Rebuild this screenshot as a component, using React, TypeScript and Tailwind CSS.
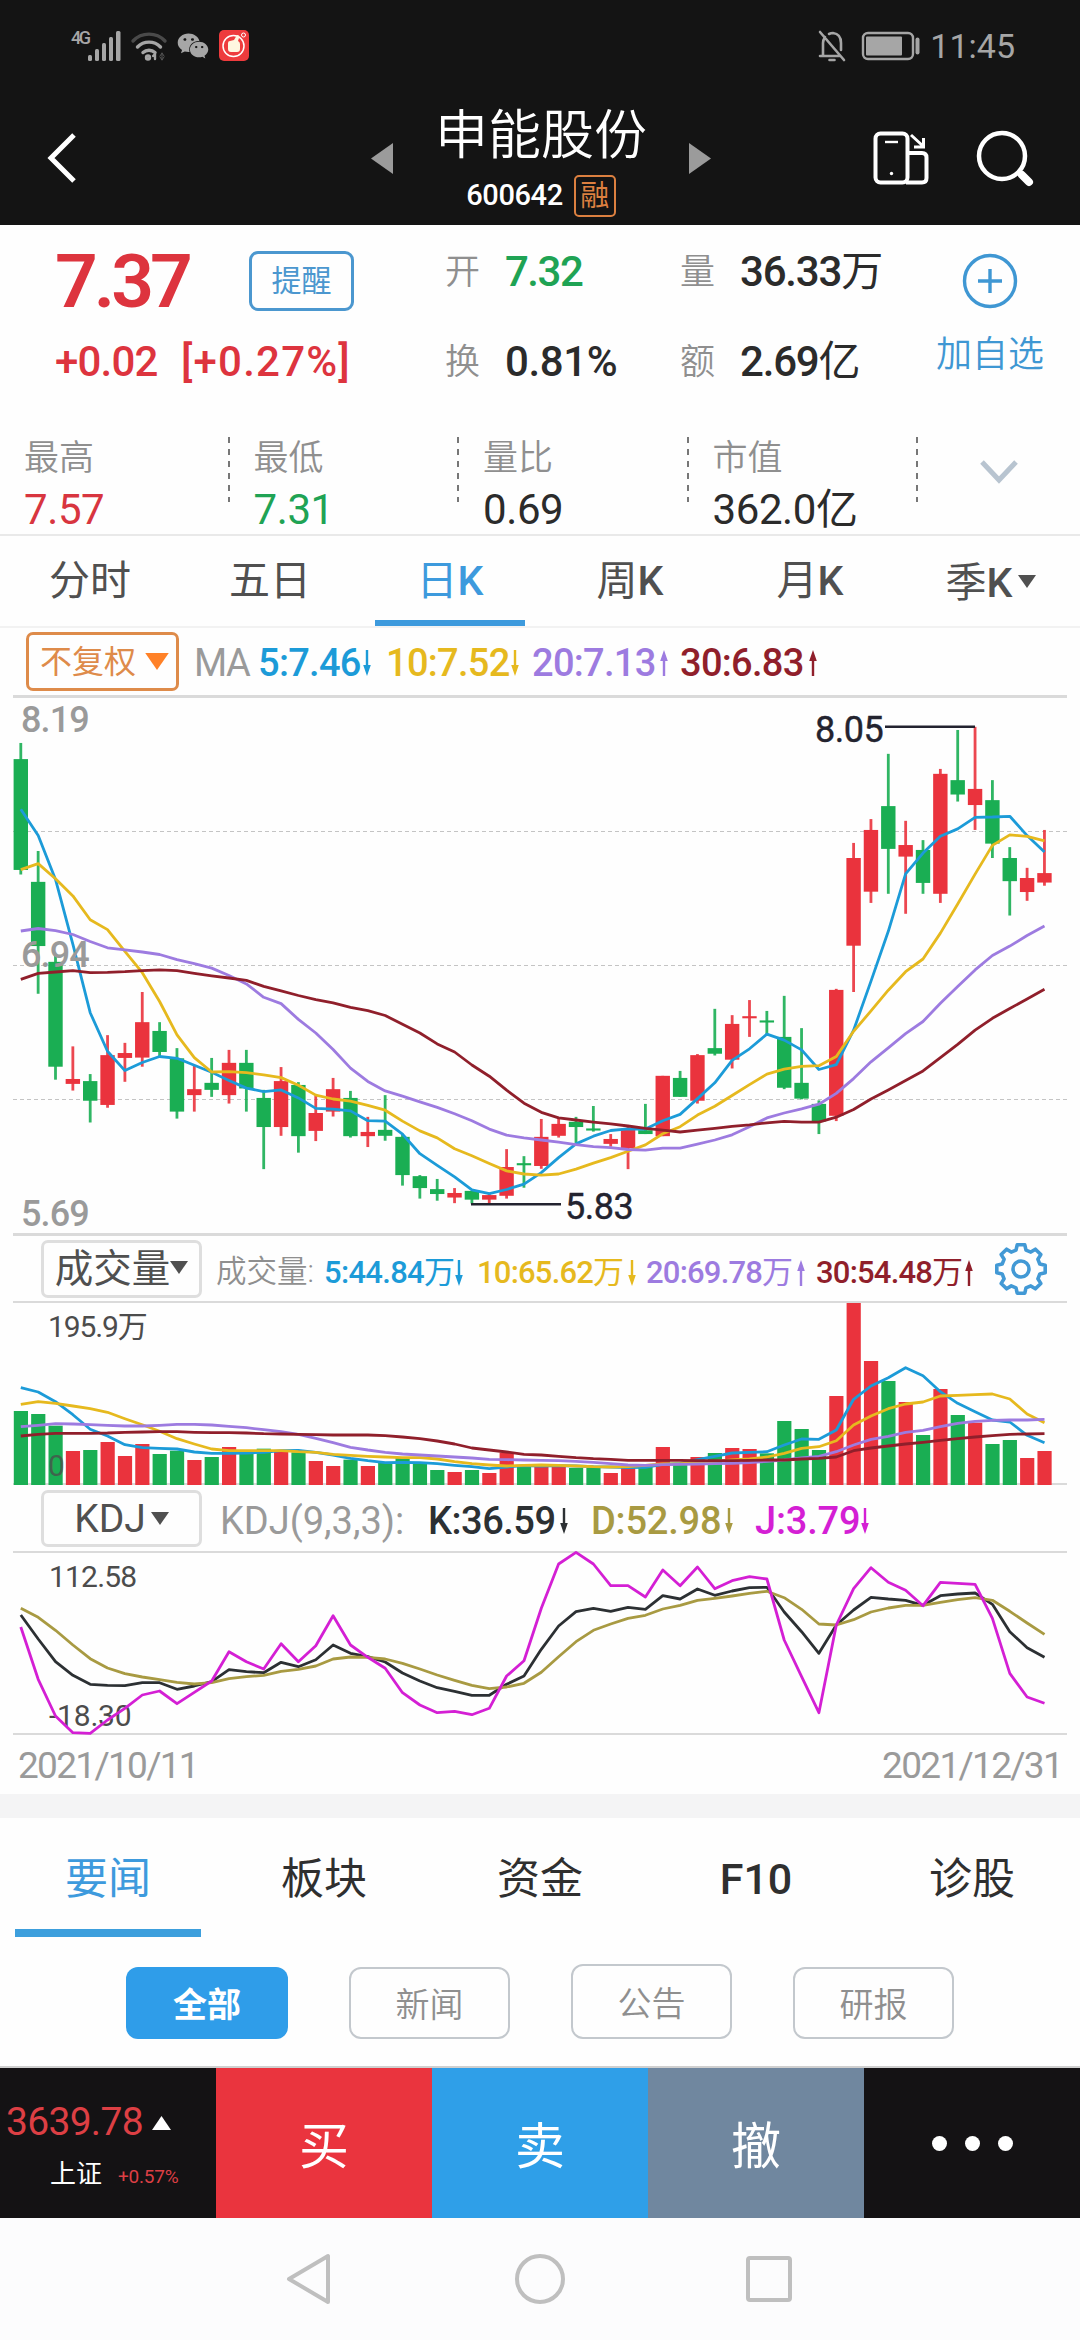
import React from 'react';
import clsx from 'clsx';
import { FaWeixin } from 'react-icons/fa';

const RED = '#ea333d';
const GREEN = '#1aae53';
const BLUE = '#1c9bd8';
const YELLOW = '#e6b91e';
const PURPLE = '#9d7be0';
const MAROON = '#901f2b';
const OLIVE = '#a89a42';
const MAGENTA = '#d41fd4';
const INK = '#2c3033';

type Candle = [up: number, high: number, low: number, top: number, bottom: number];

// [up, high, low, body top, body bottom]
const candles: Candle[] = [
  [0, 151, 526, 197, 513], [0, 459, 866, 547, 730], [0, 755, 1111, 775, 1074], [1, 1016, 1142, 1109, 1123],
  [0, 1095, 1233, 1115, 1171], [1, 984, 1191, 1041, 1183], [1, 1006, 1117, 1035, 1049], [1, 861, 1074, 947, 1048],
  [0, 947, 1045, 972, 1032], [0, 1021, 1222, 1050, 1202], [1, 1070, 1202, 1138, 1155], [0, 1049, 1160, 1120, 1140],
  [1, 1026, 1179, 1063, 1155], [0, 1026, 1202, 1063, 1136], [0, 1140, 1366, 1163, 1246], [1, 1075, 1271, 1115, 1246],
  [0, 1118, 1319, 1126, 1272], [1, 1155, 1286, 1206, 1257], [1, 1106, 1216, 1138, 1202], [0, 1143, 1276, 1163, 1272],
  [1, 1217, 1303, 1260, 1272], [0, 1155, 1285, 1254, 1271], [0, 1265, 1413, 1274, 1383], [0, 1383, 1450, 1386, 1420],
  [0, 1394, 1456, 1423, 1437], [1, 1420, 1463, 1434, 1447], [0, 1428, 1464, 1428, 1453], [1, 1437, 1464, 1440, 1453],
  [1, 1309, 1450, 1360, 1442], [0, 1329, 1419, 1349, 1355], [1, 1223, 1365, 1274, 1357], [1, 1223, 1276, 1237, 1271],
  [0, 1217, 1294, 1231, 1246], [0, 1186, 1259, 1250, 1256], [1, 1266, 1302, 1280, 1294], [1, 1246, 1366, 1252, 1306],
  [0, 1180, 1266, 1255, 1266], [1, 1100, 1272, 1100, 1272], [0, 1086, 1160, 1106, 1160], [1, 1038, 1179, 1041, 1171],
  [0, 909, 1042, 1021, 1037], [1, 927, 1079, 952, 1054], [1, 884, 989, 930, 936], [0, 915, 985, 942, 948],
  [0, 872, 1138, 989, 1134], [0, 964, 1167, 1120, 1165], [0, 1170, 1266, 1180, 1230], [1, 852, 1229, 855, 1214],
  [1, 436, 861, 479, 729], [1, 368, 607, 399, 575], [0, 182, 581, 331, 453], [1, 373, 638, 442, 475],
  [0, 428, 581, 456, 550], [1, 225, 607, 239, 581], [0, 114, 318, 257, 298], [1, 105, 399, 282, 328],
  [0, 257, 479, 314, 438], [0, 448, 643, 479, 545], [1, 507, 601, 536, 576], [1, 399, 558, 522, 549],
];

const ma5 = [340, 415, 540, 725, 920, 1030, 1085, 1062, 1045, 1050, 1070, 1090, 1113, 1135, 1145, 1140, 1163, 1193, 1195, 1200, 1228, 1229, 1266, 1322, 1355, 1388, 1425, 1436, 1424, 1409, 1376, 1333, 1294, 1272, 1256, 1251, 1252, 1228, 1210, 1165, 1120, 1056, 1023, 981, 998, 1026, 1082, 1068, 970, 830, 688, 524, 465, 417, 396, 363, 362, 360, 415, 462];
const ma10 = [512, 495, 538, 587, 655, 683, 745, 806, 888, 983, 1048, 1089, 1088, 1091, 1097, 1105, 1127, 1155, 1166, 1172, 1184, 1198, 1229, 1257, 1277, 1308, 1328, 1350, 1371, 1380, 1383, 1380, 1366, 1349, 1333, 1315, 1297, 1265, 1245, 1212, 1187, 1156, 1125, 1095, 1081, 1073, 1071, 1045, 973, 915, 856, 803, 767, 693, 610, 525, 443, 413, 417, 430];
const ma20 = [687, 680, 686, 697, 717, 735, 741, 747, 754, 769, 780, 793, 814, 838, 876, 894, 939, 978, 1025, 1078, 1116, 1143, 1158, 1174, 1190, 1208, 1228, 1252, 1269, 1277, 1283, 1289, 1296, 1302, 1305, 1310, 1312, 1306, 1306, 1295, 1283, 1268, 1245, 1220, 1206, 1194, 1181, 1150, 1108, 1060, 1020, 980, 945, 893, 845, 798, 757, 730, 700, 673];
const ma30 = [825, 808, 804, 800, 806, 805, 803, 800, 798, 800, 808, 815, 821, 828, 845, 858, 871, 883, 892, 905, 914, 928, 953, 978, 1009, 1032, 1069, 1101, 1141, 1178, 1204, 1220, 1226, 1232, 1237, 1243, 1250, 1255, 1260, 1255, 1250, 1244, 1240, 1234, 1230, 1232, 1232, 1218, 1196, 1166, 1140, 1113, 1086, 1048, 1010, 970, 936, 908, 881, 853];

const volumes = [573, 582, 617, 693, 690, 666, 708, 672, 702, 692, 720, 711, 681, 695, 686, 692, 697, 723, 738, 719, 738, 729, 714, 727, 750, 756, 750, 759, 698, 738, 737, 738, 744, 744, 759, 744, 741, 681, 735, 711, 699, 684, 687, 700, 603, 627, 690, 528, 249, 423, 483, 546, 645, 507, 585, 608, 672, 660, 714, 693];
const vol5 = [503, 516, 545, 584, 628, 648, 674, 683, 685, 687, 696, 700, 700, 699, 697, 692, 691, 697, 705, 715, 722, 728, 727, 728, 731, 736, 740, 746, 741, 737, 738, 737, 738, 740, 741, 743, 742, 733, 730, 719, 709, 699, 697, 695, 675, 657, 658, 630, 538, 498, 473, 443, 467, 515, 550, 575, 600, 606, 646, 668];
const vol10 = [553, 545, 550, 558, 566, 577, 596, 614, 634, 656, 672, 687, 692, 692, 692, 692, 695, 697, 703, 706, 709, 711, 713, 713, 717, 725, 731, 735, 738, 736, 735, 736, 738, 740, 741, 740, 736, 732, 731, 728, 724, 720, 717, 711, 700, 685, 680, 662, 615, 588, 566, 552, 546, 528, 526, 524, 522, 537, 582, 608];
const vol20 = [620, 616, 611, 612, 614, 616, 618, 618, 616, 613, 613, 615, 619, 623, 629, 635, 643, 655, 668, 682, 690, 697, 702, 705, 708, 711, 714, 718, 719, 720, 721, 722, 724, 727, 731, 735, 736, 734, 733, 732, 731, 730, 728, 724, 720, 714, 709, 695, 675, 658, 649, 637, 631, 620, 610, 604, 601, 600, 600, 598];
const vol30 = [648, 643, 640, 640, 640, 639, 637, 636, 635, 635, 637, 638, 638, 639, 641, 642, 643, 644, 645, 645, 645, 647, 651, 656, 663, 672, 684, 690, 696, 703, 705, 709, 713, 716, 718, 721, 721, 721, 721, 722, 722, 722, 721, 720, 720, 717, 715, 711, 692, 684, 678, 672, 667, 661, 656, 651, 647, 643, 642, 641];

const kLine = [375, 447, 515, 556, 583, 586, 587, 578, 578, 598, 588, 575, 539, 545, 548, 517, 530, 509, 465, 490, 500, 516, 549, 573, 593, 604, 616, 616, 583, 558, 478, 408, 365, 355, 364, 352, 358, 317, 327, 297, 316, 303, 293, 292, 366, 425, 490, 405, 360, 322, 327, 331, 346, 317, 312, 309, 343, 425, 473, 502];
const dLine = [355, 382, 421, 465, 506, 534, 551, 561, 569, 577, 582, 578, 566, 560, 556, 544, 538, 528, 507, 501, 502, 507, 520, 537, 555, 571, 586, 596, 591, 580, 547, 500, 455, 421, 402, 385, 376, 357, 346, 331, 325, 318, 310, 304, 323, 358, 402, 405, 389, 366, 354, 346, 346, 337, 329, 323, 331, 364, 399, 433];
const jLine = [411, 568, 678, 728, 730, 690, 655, 615, 603, 641, 607, 573, 485, 515, 537, 461, 515, 467, 377, 465, 502, 535, 608, 645, 668, 664, 674, 655, 558, 512, 355, 222, 187, 222, 287, 287, 321, 240, 287, 231, 296, 272, 260, 267, 450, 560, 668, 405, 296, 233, 277, 301, 347, 277, 280, 283, 385, 550, 621, 640];

const xAt = (i: number) => 20.8 + i * 17.35;
const priceY = (v: number) => 690 + v / 2.851;
const volumeY = (v: number) => 1220 + v / 3;
const kdjY = (v: number) => 1490 + v / 3;

function Series({ data, y, color }: { data: number[]; y: (v: number) => number; color: string }) {
  const points = data.map((v, i) => `${xAt(i).toFixed(1)},${y(v).toFixed(1)}`).join(' ');
  return <polyline points={points} fill="none" stroke={color} strokeWidth="2.8" strokeLinejoin="round" />;
}

function Arrow({ up = false }: { up?: boolean }) {
  return (
    <svg viewBox="0 0 10 28" className={clsx('h-[28px] w-[10px] shrink-0', up && 'rotate-180')} fill="currentColor">
      <path d="M3.8 1h2.4v15h2.6L5 27 1.2 16h2.6z" />
    </svg>
  );
}

function Caret({ className }: { className?: string }) {
  return (
    <svg viewBox="0 0 18 13" className={clsx('h-[13px] w-[18px] shrink-0', className)} fill="currentColor">
      <path d="M0 0h18L9 13z" />
    </svg>
  );
}

// Digits are set in medium, the trailing 万 / 亿 stays regular
function Amount({ value }: { value: string }) {
  const hasUnit = /[万亿]$/.test(value);
  return (
    <>
      {hasUnit ? value.slice(0, -1) : value}
      {hasUnit && <span className="font-normal">{value.slice(-1)}</span>}
    </>
  );
}

function Indicator({ text, up, className }: { text: string; up?: boolean; className: string }) {
  return (
    <div className={clsx('flex shrink-0 items-center justify-between whitespace-nowrap font-medium', className)}>
      <span>
        <Amount value={text} />
      </span>
      <Arrow up={up} />
    </div>
  );
}

function StatusBar() {
  return (
    <div className="flex h-[91px] items-center pl-[71px] pr-[65px] text-[#a6a6a6]">
      <span className="mb-4 w-[17px] text-[18px] font-medium leading-none tracking-[-2.5px]">4G</span>
      <svg viewBox="0 0 34 32" className="h-[32px] w-[34px]" fill="currentColor">
        <rect x="0" y="25" width="4" height="6" rx="1.5" />
        <rect x="7" y="19" width="4" height="12" rx="1.5" />
        <rect x="14" y="13" width="4" height="18" rx="1.5" />
        <rect x="21" y="7" width="4" height="24" rx="1.5" />
        <rect x="28" y="1" width="4.5" height="30" rx="1.5" />
      </svg>
      <svg viewBox="0 0 38 32" className="ml-[8px] h-[32px] w-[38px]" fill="none" stroke="currentColor" strokeWidth="3.4" strokeLinecap="round">
        <path d="M3 11a22 22 0 0 1 32 0" stroke="#4a4a4a" />
        <path d="M7.500 17a16 16 0 0 1 23 0" />
        <path d="M13 22.500a9 9 0 0 1 12 0" />
        <circle cx="18" cy="27.500" r="1.500" />
        <path d="M25 24v5M25 24l-2 2" strokeWidth="2.400" />
        <path d="M32 23v7m-2-4 2-3 2 3m-4 1 2 3 2-3" strokeWidth="1" stroke="#555" />
      </svg>
      <FaWeixin className="ml-[9px] size-[32px]" />
      <svg viewBox="0 0 30 31" className="ml-[10px] h-[31px] w-[30px]">
        <rect width="30" height="31" rx="5" fill="#ee3b3d" />
        <circle cx="14.500" cy="16" r="10.500" fill="none" stroke="#fff" strokeWidth="1.500" />
        <path d="M9 13q0-2 2-2l4-1 3-5q3 0 2 3l-1 3q2 1 2 3v5q0 3-3 3h-6q-3 0-3-3z" fill="#fff6e0" />
        <circle cx="24.500" cy="5" r="2" fill="none" stroke="#fff" />
      </svg>
      <div className="ml-auto flex items-center">
        <svg viewBox="0 0 30 34" className="h-[34px] w-[30px]" fill="none" stroke="currentColor" strokeWidth="2.600" strokeLinecap="round" strokeLinejoin="round">
          <path d="M3 27h19M6 26V14q0-3 2-6M12 5q2-1 4-1 8 1 8 10v7M3 3l24 28M12.500 31h5" />
        </svg>
        <svg viewBox="0 0 60 30" className="ml-[14px] h-[30px] w-[60px]" fill="none" stroke="currentColor" strokeWidth="2.400">
          <rect x="2" y="2" width="50" height="26" rx="5" />
          <rect x="5" y="5.500" width="36" height="19" rx="1" fill="currentColor" stroke="none" />
          <path d="M56.500 8.500v13" strokeWidth="4" strokeLinecap="round" />
        </svg>
        <span className="ml-[9px] text-[34px] leading-none">11:45</span>
      </div>
    </div>
  );
}

function TitleBar() {
  return (
    <div className="flex h-[134px] items-center justify-between pl-[46px] pr-[46px] text-white">
      <svg viewBox="0 0 32 52" className="h-[52px] w-[32px]" fill="none" stroke="currentColor" strokeWidth="5">
        <path d="M28 3 5 26l23 23" />
      </svg>
      <div className="ml-[132px] flex items-center">
        <svg viewBox="0 0 22 31" className="h-[31px] w-[22px]" fill="#9b9b9b">
          <path d="M22 0v31L0 15.500z" />
        </svg>
        <div className="mx-[42px] flex w-[212px] flex-col items-center pt-[10px]">
          <h1 className="whitespace-nowrap text-[53px] font-[350] leading-none">申能股份</h1>
          <div className="mt-[12px] flex items-center gap-[11px] whitespace-nowrap">
            <span className="text-[29px] font-medium leading-none tracking-[-0.4px]">600642</span>
            <span className="flex size-[42px] items-center justify-center rounded-[5px] border-[2.500px] border-[#dc8040] pt-[2px] text-[29px] leading-none text-[#dc8040]">
              融
            </span>
          </div>
        </div>
        <svg viewBox="0 0 22 31" className="h-[31px] w-[22px]" fill="#9b9b9b">
          <path d="M0 0v31l22-15.500z" />
        </svg>
      </div>
      <div className="flex items-center gap-[46px]">
        <svg viewBox="0 0 58 56" className="h-[56px] w-[58px]" fill="none" stroke="currentColor" strokeWidth="4">
          <rect x="3.500" y="3.500" width="32" height="49" rx="5" />
          <path d="M13 12h13" strokeWidth="2.400" />
          <circle cx="19.500" cy="43.500" r="1.700" fill="currentColor" stroke="none" />
          <path d="M36 23h14q4.500 0 4.500 4.500V48q0 4.500-4.500 4.500H34" />
          <path d="m39 5 12 11M51.500 8v9H42" strokeWidth="3" />
        </svg>
        <svg viewBox="0 0 58 58" className="h-[58px] w-[58px]" fill="none" stroke="currentColor" strokeWidth="4.500">
          <circle cx="26" cy="27" r="23" />
          <path d="m42 43 3 3" />
          <path d="m46 46 7 7" strokeWidth="8" strokeLinecap="round" />
        </svg>
      </div>
    </div>
  );
}

function Quote({ label, value, className = 'tracking-[-1.2px] text-[#2b2b2b]' }: { label: string; value: string; className?: string }) {
  return (
    <>
      <span className="w-[60px] text-[35px] font-[350] text-[#8f8f8f]">{label}</span>
      <span className={clsx('text-[42px] font-medium', className)}>
        <Amount value={value} />
      </span>
    </>
  );
}

const stats = [
  { label: '最高', value: '7.57', tone: 'text-[#d8353f]' },
  { label: '最低', value: '7.31', tone: 'text-[#1fa354]' },
  { label: '量比', value: '0.69', tone: 'text-[#2b2b2b]' },
  { label: '市值', value: '362.0亿', tone: 'text-[#2b2b2b]' },
];

function Summary() {
  return (
    <section className="h-[311px] border-b-2 border-[#e9e9e9] leading-none">
      <div className="flex h-[160px] whitespace-nowrap">
        <div className="w-[445px] pl-[55px]">
          <div className="flex h-[112px] items-center text-[#dd343e]">
            <span className="w-[194px] text-[75px] font-semibold tracking-[-4px]">7.37</span>
            <button className="h-[60px] w-[105px] rounded-[9px] border-[3px] border-[#4b97cf] text-[30px] text-[#4b97cf]">提醒</button>
          </div>
          <div className="flex h-[48px] items-center pt-[2px] text-[42px] font-medium text-[#dd343e]">
            <span className="w-[126px] tracking-[-0.8px]">+0.02</span>
            <span className="tracking-[1.2px]">[+0.27%]</span>
          </div>
        </div>
        <div className="w-[235px]">
          <div className="flex h-[92px] items-center pt-[2px]">
            <Quote label="开" value="7.32" className="tracking-[-1.500px] text-[#1fa354]" />
          </div>
          <div className="flex h-[88px] items-center pt-[2px]">
            <Quote label="换" value="0.81%" className="tracking-[-0.4px] text-[#2b2b2b]" />
          </div>
        </div>
        <div className="w-[250px]">
          <div className="flex h-[92px] items-center pt-[2px]">
            <Quote label="量" value="36.33万" />
          </div>
          <div className="flex h-[88px] items-center pt-[2px]">
            <Quote label="额" value="2.69亿" />
          </div>
        </div>
        <div className="flex w-[120px] flex-col items-center text-[#3f97d3]">
          <div className="flex h-[112px] items-center">
            <svg viewBox="0 0 56 56" className="size-[56px]" fill="none" stroke="currentColor" strokeWidth="3.400">
              <circle cx="28" cy="28" r="25.500" />
              <path d="M28 16v24M16 28h24" />
            </svg>
          </div>
          <span className="text-[36px] font-[350]">加自选</span>
        </div>
      </div>
      <div className="flex h-[149px]">
        {stats.map((s) => (
          <div key={s.label} className="relative w-[229.500px] pl-[24px] pt-[56px]">
            <div className="text-[35px] font-[350] text-[#8f8f8f]">{s.label}</div>
            <div className={clsx('mt-[13px] whitespace-nowrap text-[42px] tracking-[-0.4px]', s.tone)}>{s.value}</div>
            <svg viewBox="0 0 2 66" className="absolute right-0 top-[51px] h-[66px] w-[2px]" stroke="#777" strokeWidth="2">
              <path d="M1 1v65" strokeDasharray="6 6" />
            </svg>
          </div>
        ))}
        <svg viewBox="0 0 40 25" className="ml-[61px] mt-[74px] h-[25px] w-[40px]" fill="none" stroke="#b8c4d0" strokeWidth="5">
          <path d="m3 3 17 18L37 3" />
        </svg>
      </div>
    </section>
  );
}

const periods = ['分时', '五日', '日K', '周K', '月K', '季K'];

function PeriodTabs() {
  return (
    <nav className="flex h-[92px] border-b-2 border-[#f2f2f2] text-[41px] leading-none text-[#505050]">
      {periods.map((p, i) => (
        <div key={p} className={clsx('flex w-[180px] flex-col items-center', i === 2 && 'text-[#3d9add]')}>
          <div className={clsx('flex h-[84px] items-center', i === 5 ? 'pl-[2px] pt-[10px]' : 'pt-[6px]')}>
            <span>
              {p.replace('K', '')}
              {p.endsWith('K') && <span className="font-medium">K</span>}
            </span>
            {i === 5 && <Caret className="mb-[4px] ml-[6px]" />}
          </div>
          {i === 2 && <div className="h-[6px] w-[150px] bg-[#3d9add]" />}
        </div>
      ))}
    </nav>
  );
}

function MaRow() {
  return (
    <div className="mx-[13px] flex h-[70px] items-center border-b-[3px] border-[#dadada] pl-[13px] text-[38px] leading-none tracking-[-0.7px]">
      <button className="flex h-[59px] w-[153px] shrink-0 items-center justify-between rounded-[7px] border-[3px] border-[#de8b4a] pl-[11px] pr-[7px] text-[32px] tracking-normal text-[#de8b4a]">
        <span>不复权</span>
        <Caret className="h-[17px] w-[24px] text-[#ff8127]" />
      </button>
      <span className="ml-[15px] w-[64px] pt-[3px] tracking-[-1.500px] text-[#9a9a9a]">MA</span>
      <Indicator text="5:7.46" className="mr-[14px] w-[114px] pt-[3px] text-[#1c9bd8]" />
      <Indicator text="10:7.52" className="mr-[12px] w-[134px] pt-[3px] text-[#e6b91e]" />
      <Indicator text="20:7.13" up className="mr-[11px] w-[137px] pt-[3px] text-[#9d7be0]" />
      <Indicator text="30:6.83" up className="w-[138px] pt-[3px] text-[#901f2b]" />
    </div>
  );
}

function PriceChart() {
  return (
    <svg viewBox="0 698 1080 535" className="block h-[535px] w-[1080px] overflow-visible">
      <path d="M13 831.500h1054M13 965.500h1054M13 1099.500h1054" stroke="#c4c4c4" strokeWidth="1" strokeDasharray="4 3" />
      {candles.map(([up, high, low, top, bottom], i) => {
        const color = up ? RED : GREEN;
        return (
          <g key={i} fill={color}>
            <rect x={xAt(i) - 1.4} y={priceY(high)} width="2.8" height={priceY(low) - priceY(high)} opacity="0.9" />
            <rect x={xAt(i) - 7.2} y={priceY(top)} width="14.4" height={priceY(bottom) - priceY(top)} />
          </g>
        );
      })}
      <Series data={ma5} y={priceY} color={BLUE} />
      <Series data={ma10} y={priceY} color={YELLOW} />
      <Series data={ma20} y={priceY} color={PURPLE} />
      <Series data={ma30} y={priceY} color={MAROON} />
      <g fontSize="36" fontWeight="500" fill="#9a9a9a" letterSpacing="-0.9">
        <text x="21" y="732">8.19</text>
        <text x="21" y="966.500">6.94</text>
        <text x="21" y="1226">5.69</text>
      </g>
      <g fontSize="36" fill="#23232f" stroke="#23232f" strokeWidth="0.4" letterSpacing="-0.5">
        <text x="815" y="742">8.05</text>
        <text x="565" y="1219">5.83</text>
      </g>
      <path d="M885 726.800h90M471 1204.300h90" stroke="#23232f" strokeWidth="2.600" />
    </svg>
  );
}

function gearPath() {
  const parts: string[] = [];
  for (let i = 0; i < 8; i++) {
    for (const [offset, r] of [[-15, 19.5], [-9, 24.5], [9, 24.5], [15, 19.5]]) {
      const a = ((i * 45 + offset) * Math.PI) / 180;
      parts.push(`${(28 + r * Math.sin(a)).toFixed(1)} ${(28 - r * Math.cos(a)).toFixed(1)}`);
    }
  }
  return `M${parts.join('L')}Z`;
}

function VolumePanel() {
  return (
    <>
      <div className="mx-[13px] flex h-[70px] items-center border-y-[3px] border-[#dadada] border-b-2 pl-[28px] text-[31px] leading-none">
        <button className="flex h-[58px] w-[161px] shrink-0 items-center justify-center whitespace-nowrap rounded-[7px] border-[3px] border-[#dedede] pt-[2px] text-[38.500px] text-[#505050]">
          成交量
          <Caret className="mb-[4px]" />
        </button>
        <span className="ml-[14px] w-[108px] whitespace-nowrap pt-[8px] text-[30.500px] font-[350] text-[#8f8f8f]">成交量:</span>
        <Indicator text="5:44.84万" className="mr-[13px] w-[140px] pt-[8px] tracking-[-0.7px] text-[#1c9bd8]" />
        <Indicator text="10:65.62万" className="mr-[9px] w-[160px] pt-[8px] tracking-[-0.8px] text-[#e6b91e]" />
        <Indicator text="20:69.78万" up className="mr-[10px] w-[160px] pt-[8px] tracking-[-0.8px] text-[#9d7be0]" />
        <Indicator text="30:54.48万" up className="w-[158px] pt-[8px] tracking-[-0.8px] text-[#901f2b]" />
        <svg viewBox="0 0 56 56" className="ml-[19px] size-[56px] shrink-0" fill="none" stroke="#4299d5" strokeWidth="3.600" strokeLinejoin="round">
          <path d={gearPath()} />
          <circle cx="28" cy="28" r="8" />
        </svg>
      </div>
      <svg viewBox="0 1303 1080 182" className="block h-[182px] w-[1080px] overflow-visible">
        <path d="M13 1484h1054" stroke="#dadada" strokeWidth="2" />
        <text x="48" y="1337" fontSize="30" letterSpacing="-1.1" fill="#4c4c4c">195.9万</text>
        {volumes.map((v, i) => (
          <rect key={i} x={xAt(i) - 7} y={volumeY(v)} width="14.2" height={volumeY(795) - volumeY(v)} fill={candles[i][0] ? RED : GREEN} />
        ))}
        <Series data={vol5} y={volumeY} color={BLUE} />
        <Series data={vol10} y={volumeY} color={YELLOW} />
        <Series data={vol20} y={volumeY} color={PURPLE} />
        <Series data={vol30} y={volumeY} color={MAROON} />
        <text x="48" y="1476" fontSize="30" fill="#4c4c4c" fillOpacity="0.75">0</text>
      </svg>
    </>
  );
}

function KdjPanel() {
  return (
    <>
      <div className="mx-[13px] flex h-[68px] items-center border-b-2 border-[#dadada] pl-[28px] text-[38px] leading-none">
        <button className="flex h-[57px] w-[161px] shrink-0 items-center justify-center gap-[5px] rounded-[7px] border-[3px] border-[#dedede] pt-[2px] text-[39px] text-[#505050]">
          KDJ
          <Caret className="mb-[2px]" />
        </button>
        <span className="ml-[18px] w-[208px] whitespace-nowrap pt-[5px] text-[#9a9a9a]">KDJ(9,3,3):</span>
        <Indicator text="K:36.59" className="mr-[22px] w-[141px] pt-[5px] tracking-[-0.5px] text-[#2c3033]" />
        <Indicator text="D:52.98" className="mr-[21px] w-[143px] pt-[5px] tracking-[-0.2px] text-[#a89a42]" />
        <Indicator text="J:3.79" className="w-[113px] pt-[5px] tracking-[-0.2px] text-[#d41fd4]" />
      </div>
      <svg viewBox="0 1553 1080 183" className="block h-[183px] w-[1080px] overflow-visible">
        <path d="M13 1734h1054" stroke="#dadada" strokeWidth="2" />
        <g fontSize="30" fill="#4c4c4c">
          <text x="49" y="1587" letterSpacing="-0.8">112.58</text>
          <text x="49" y="1726" letterSpacing="-0.2">-18.30</text>
        </g>
        <Series data={kLine} y={kdjY} color={INK} />
        <Series data={dLine} y={kdjY} color={OLIVE} />
        <Series data={jLine} y={kdjY} color={MAGENTA} />
      </svg>
      <div className="flex h-[58px] items-center justify-between pl-[18px] pr-[18px] text-[37px] leading-none tracking-[-1.700px] text-[#9a9a9a]">
        <span>2021/10/11</span>
        <span>2021/12/31</span>
      </div>
    </>
  );
}

const newsTabs = ['要闻', '板块', '资金', 'F10', '诊股'];
const filters = ['新闻', '公告', '研报'];

function NewsSection() {
  return (
    <section className="h-[272px] border-t-[24px] border-[#f4f4f5] leading-none">
      <nav className="flex h-[119px] text-[43px] text-[#2f2f2f]">
        {newsTabs.map((t, i) => (
          <div key={t} className={clsx('flex w-[216px] flex-col items-center', i === 0 && 'text-[#3d9add]')}>
            <span className={clsx('flex h-[111px] items-center pt-[12px]', t === 'F10' && 'font-medium')}>{t}</span>
            {i === 0 && <div className="h-[8px] w-[186px] bg-[#3d9fdd]" />}
          </div>
        ))}
      </nav>
      <div className="flex items-end gap-[61px] pl-[126px] pt-[27px] text-[34px] text-[#8f8f8f]">
        <button className="h-[72px] w-[162px] rounded-[12px] bg-[#2f9de9] pt-[4px] font-bold text-white">全部</button>
        {filters.map((f) => (
          <button
            key={f}
            className={clsx('w-[161px] rounded-[12px] border-2 border-[#c3c8cd] pt-[4px] font-[350]', f === '公告' ? 'h-[75px]' : 'h-[72px]')}
          >
            {f}
          </button>
        ))}
      </div>
    </section>
  );
}

function TradeBar() {
  return (
    <div className="flex h-[152px] border-t-2 border-[#cfcfcf] leading-none text-white">
      <div className="w-[216px] bg-[#141214] pt-[35px]">
        <div className="flex items-center pl-[6px]">
          <span className="w-[146px] text-[39px] tracking-[-0.7px] text-[#dd3f44]">3639.78</span>
          <svg viewBox="0 0 19 14" className="h-[14px] w-[19px]" fill="currentColor">
            <path d="M9.500 0 19 14H0z" />
          </svg>
        </div>
        <div className="mt-[19px] flex items-center pl-[50px]">
          <span className="w-[68px] text-[26px]">上证</span>
          <span className="mt-1 text-[19px] tracking-[-0.2px] text-[#dd3f44]">+0.57%</span>
        </div>
      </div>
      <button className="w-[216px] bg-[#ea343e] pt-[7px] text-[50px]">买</button>
      <button className="w-[216px] bg-[#2f9fe8] pt-[7px] text-[50px]">卖</button>
      <button className="w-[216px] bg-[#70879f] pt-[7px] text-[50px]">撤</button>
      <div className="flex w-[216px] items-center justify-center gap-[18px] bg-[#141214]">
        <i className="size-[15px] rounded-full bg-white" />
        <i className="size-[15px] rounded-full bg-white" />
        <i className="size-[15px] rounded-full bg-white" />
      </div>
    </div>
  );
}

function SystemNav() {
  return (
    <div className="flex h-[122px] items-center bg-[#fcfcfd] pl-[286px]">
      <svg viewBox="0 0 46 52" className="h-[52px] w-[46px]" fill="none" stroke="#bfbfbf" strokeWidth="4" strokeLinejoin="round">
        <path d="M42 3v46L3 26z" />
      </svg>
      <div className="ml-[183px] size-[50px] rounded-full border-4 border-[#bfbfbf]" />
      <div className="ml-[181px] size-[46px] rounded-[4px] border-4 border-[#bfbfbf]" />
    </div>
  );
}

export default function App() {
  return (
    <main className="h-[2340px] w-[1080px] overflow-hidden bg-[#fefefe] font-['Roboto','Noto_Sans_CJK_SC',sans-serif]">
      <header className="h-[225px] bg-[#141414]">
        <StatusBar />
        <TitleBar />
      </header>
      <Summary />
      <PeriodTabs />
      <MaRow />
      <PriceChart />
      <VolumePanel />
      <KdjPanel />
      <NewsSection />
      <TradeBar />
      <SystemNav />
    </main>
  );
}
